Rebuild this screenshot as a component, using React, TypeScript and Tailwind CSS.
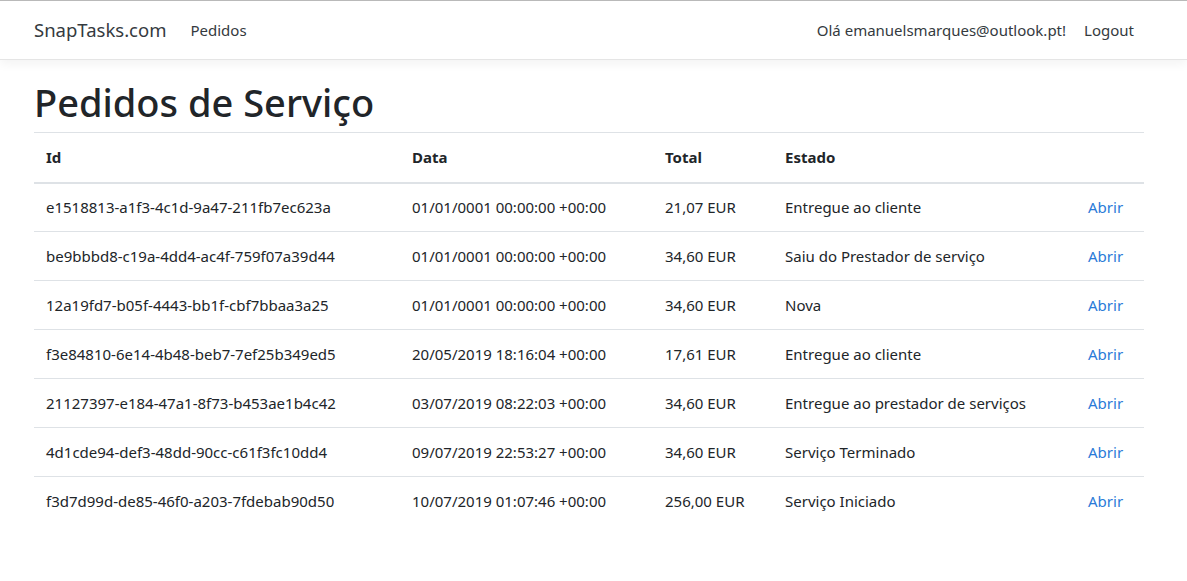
import React from "react";

type Pedido = {
  id: string;
  data: string;
  total: string;
  estado: string;
};

const pedidos: Pedido[] = [
  { id: "e1518813-a1f3-4c1d-9a47-211fb7ec623a", data: "01/01/0001 00:00:00 +00:00", total: "21,07 EUR", estado: "Entregue ao cliente" },
  { id: "be9bbbd8-c19a-4dd4-ac4f-759f07a39d44", data: "01/01/0001 00:00:00 +00:00", total: "34,60 EUR", estado: "Saiu do Prestador de serviço" },
  { id: "12a19fd7-b05f-4443-bb1f-cbf7bbaa3a25", data: "01/01/0001 00:00:00 +00:00", total: "34,60 EUR", estado: "Nova" },
  { id: "f3e84810-6e14-4b48-beb7-7ef25b349ed5", data: "20/05/2019 18:16:04 +00:00", total: "17,61 EUR", estado: "Entregue ao cliente" },
  { id: "21127397-e184-47a1-8f73-b453ae1b4c42", data: "03/07/2019 08:22:03 +00:00", total: "34,60 EUR", estado: "Entregue ao prestador de serviços" },
  { id: "4d1cde94-def3-48dd-90cc-c61f3fc10dd4", data: "09/07/2019 22:53:27 +00:00", total: "34,60 EUR", estado: "Serviço Terminado" },
  { id: "f3d7d99d-de85-46f0-a203-7fdebab90d50", data: "10/07/2019 01:07:46 +00:00", total: "256,00 EUR", estado: "Serviço Iniciado" },
];

function Navbar() {
  return (
    <nav className="h-[60px] border-t border-t-[#b9b9b9] border-b border-b-[#e5e5e5] bg-white shadow-[0_4px_10px_rgba(0,0,0,0.05)]">
      <div className="ml-[34px] flex h-full w-[1110px] items-center">
        <span className="text-[18.5px] text-[#343a40]">SnapTasks.com</span>
        <a className="ml-[24px] text-[15px] text-[#343a40]">Pedidos</a>
        <div className="ml-auto flex items-center">
          <span className="text-[15px] text-[#343a40]">Olá emanuelsmarques@outlook.pt!</span>
          <a className="ml-[18px] mr-[10px] text-[15px] text-[#343a40]">Logout</a>
        </div>
      </div>
    </nav>
  );
}

export default function App() {
  return (
    <div className="min-h-[581px] bg-white font-['Noto_Sans','Liberation_Sans',sans-serif] text-[#212529]">
      <Navbar />
      <main className="ml-[34px] w-[1110px]">
        <h1 className="mt-[19px] mb-[7px] text-[38px] leading-[46px] font-medium">Pedidos de Serviço</h1>
        <table className="w-full border-collapse text-[15px]">
          <thead>
            <tr className="border-t border-[#dee2e6] border-b-2 border-b-[#dee2e6]">
              <th className="h-[50px] w-[366px] px-3 text-left font-bold">Id</th>
              <th className="w-[253px] px-3 text-left font-bold">Data</th>
              <th className="w-[120px] px-3 text-left font-bold">Total</th>
              <th className="w-[303px] px-3 text-left font-bold">Estado</th>
              <th className="px-3"></th>
            </tr>
          </thead>
          <tbody>
            {pedidos.map((p) => (
              <tr key={p.id} className="border-t border-[#dee2e6] first:border-t-0">
                <td className="h-[49px] px-3">{p.id}</td>
                <td className="px-3">{p.data}</td>
                <td className="px-3">{p.total}</td>
                <td className="px-3">{p.estado}</td>
                <td className="px-3">
                  <a className="text-[#2a7ad8]">Abrir</a>
                </td>
              </tr>
            ))}
          </tbody>
        </table>
      </main>
    </div>
  );
}
